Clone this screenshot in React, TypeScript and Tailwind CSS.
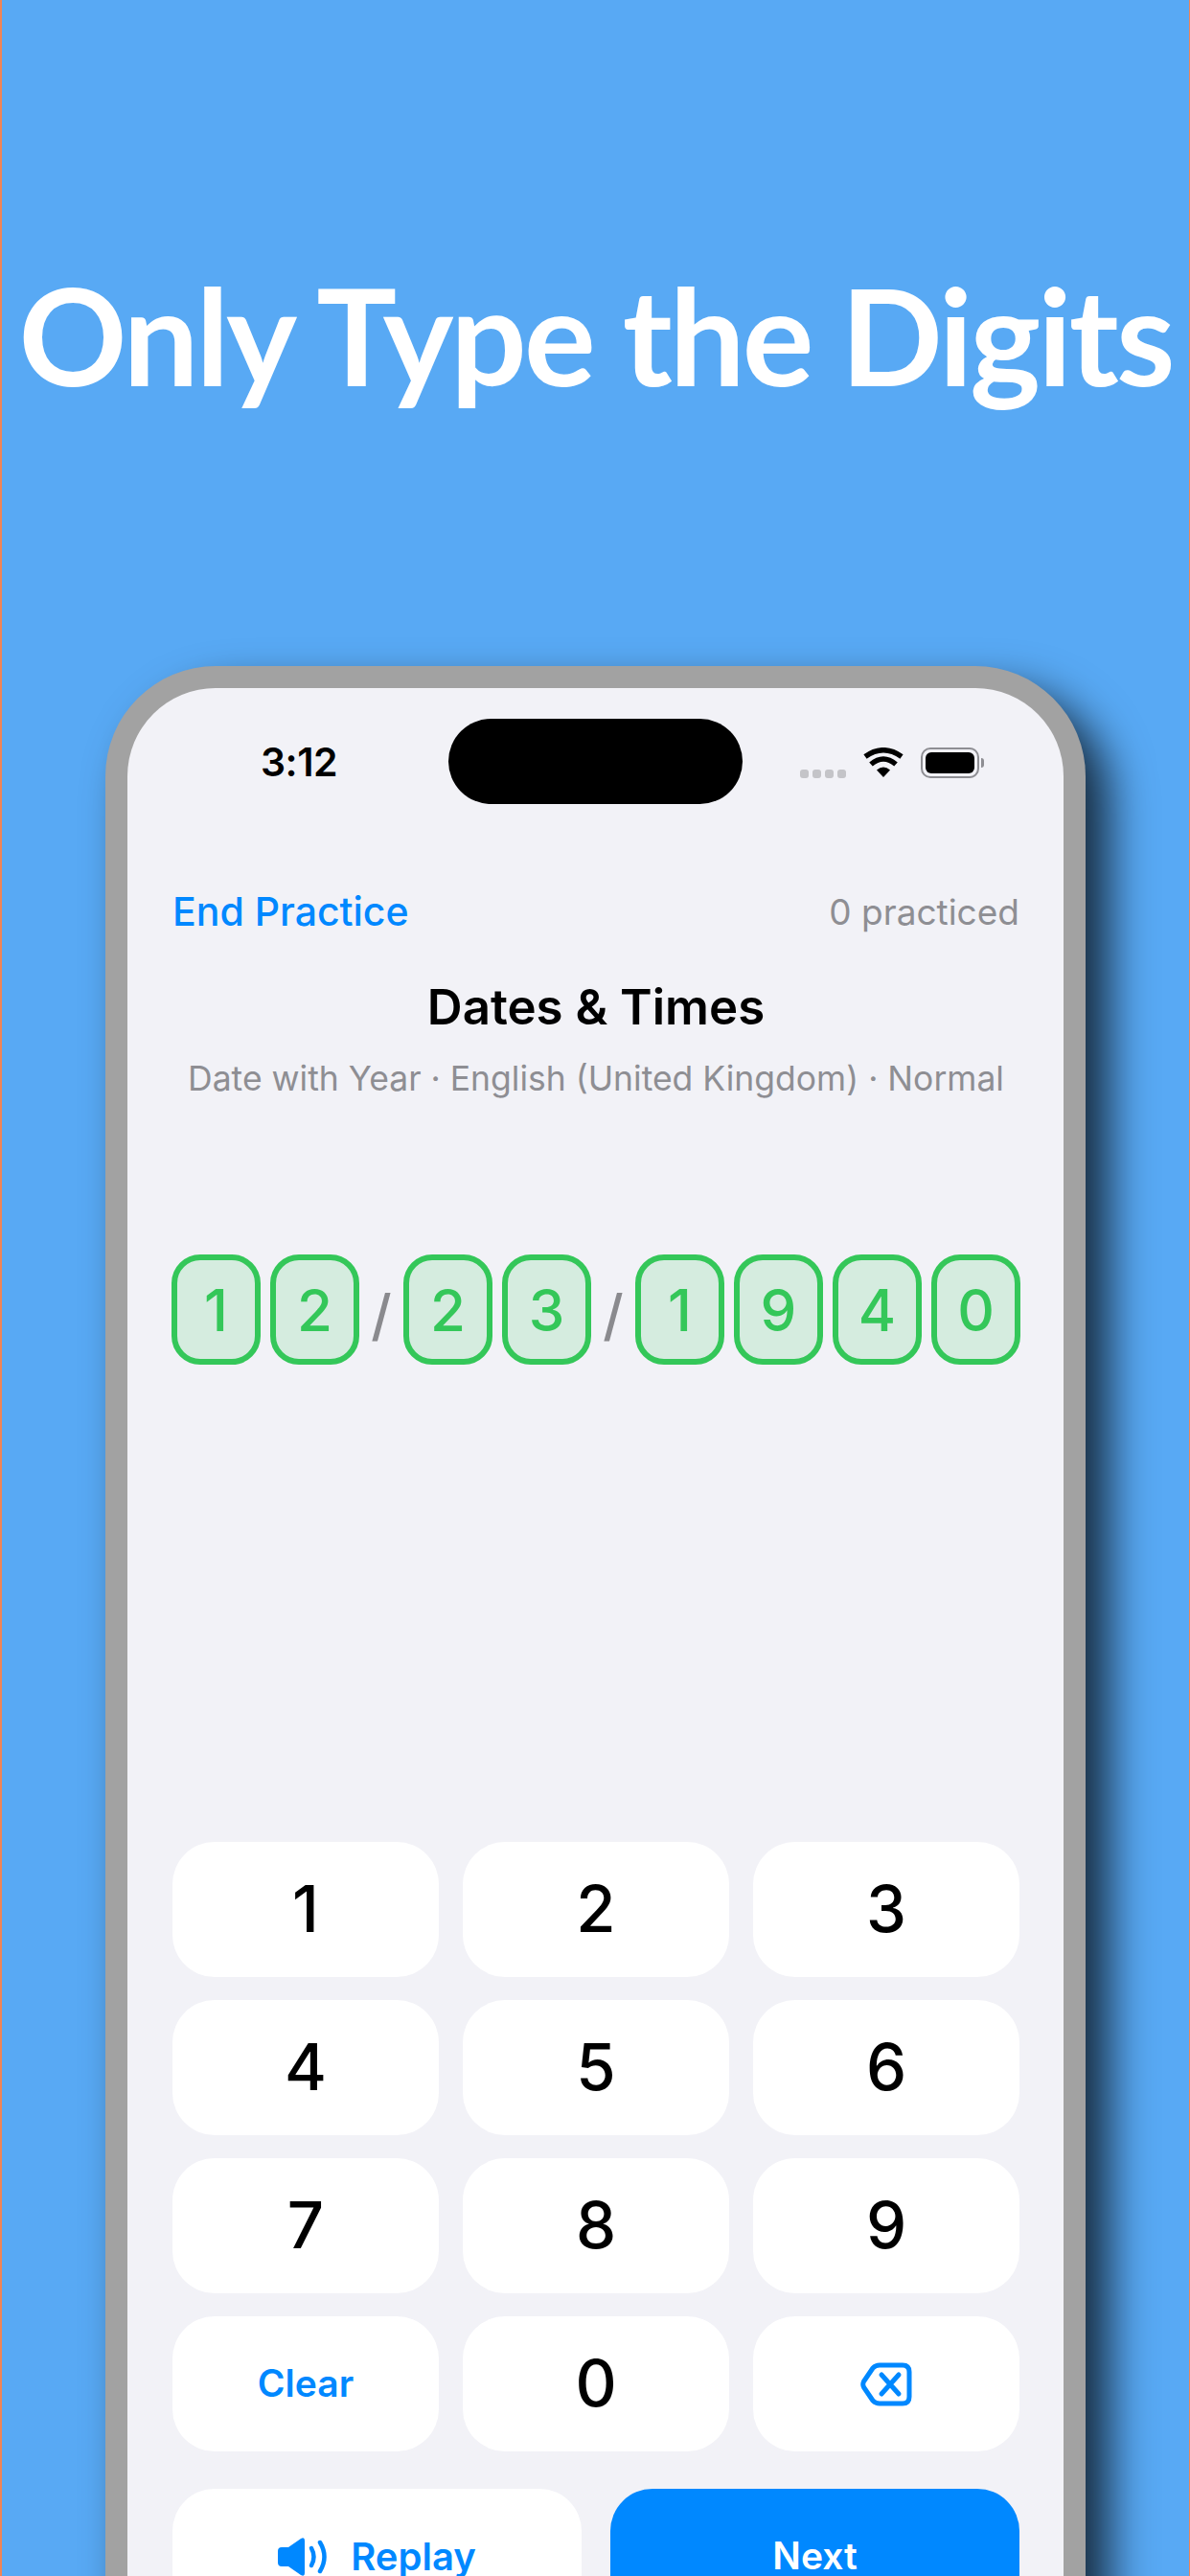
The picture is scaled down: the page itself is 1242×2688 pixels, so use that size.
import { ReactNode } from 'react';

const KEYS = ['1', '2', '3', '4', '5', '6', '7', '8', '9'];

function DigitBox({ value }: { value: string }) {
  return (
    <div className="flex h-[115px] w-[93px] items-center justify-center rounded-[30px] border-[6px] border-[#34c759] bg-[#d5ecdf] text-[60px] font-[550] text-[#34c759]">
      {value}
    </div>
  );
}

function Slash() {
  return <span className="w-[46px] pt-[12px] text-center text-[58px] font-medium text-[#8a8a8e]">/</span>;
}

function Key({ children }: { children: ReactNode }) {
  return (
    <div className="flex h-[141px] items-center justify-center rounded-[44px] bg-white text-[67px] font-[550] text-black">
      {children}
    </div>
  );
}

function Wifi() {
  return (
    <svg width="42" height="32" viewBox="0 0 42 32" fill="none">
      <path d="M21 31 L14 23.5 Q21 17.5 28 23.5 Z" fill="#000" />
      <path d="M8 17.5 Q21 6.5 34 17.5" stroke="#000" strokeWidth="5.5" />
      <path d="M2 9.5 Q21 -4 40 9.5" stroke="#000" strokeWidth="5.5" />
    </svg>
  );
}

function Battery() {
  return (
    <div className="flex items-center gap-[2px]">
      <div className="h-[32px] w-[61px] rounded-[10px] border-2 border-[#8e8e93] p-[3px]">
        <div className="h-full w-full rounded-[6px] bg-black" />
      </div>
      <div className="h-[10px] w-[3px] rounded-r-full bg-[#8e8e93]" />
    </div>
  );
}

function DeleteIcon() {
  return (
    <svg width="54" height="46" viewBox="0 0 54 46" fill="none" stroke="#0088ff" strokeWidth="5" strokeLinejoin="round" strokeLinecap="round">
      <path d="M20 3 H44 Q51 3 51 10 V36 Q51 43 44 43 H20 Q16 43 13 40 L3.5 26 Q2 23 3.5 20 L13 6 Q16 3 20 3 Z" />
      <path d="M22 13 L40 33 M40 13 L22 33" />
    </svg>
  );
}

function SpeakerIcon() {
  return (
    <svg width="52" height="40" viewBox="0 0 52 40" fill="none">
      <path d="M4 10 H11 L24 1 Q28 -1 28 3 V37 Q28 41 24 39 L11 30 H4 Q0 30 0 26 V14 Q0 10 4 10 Z" fill="#0088ff" />
      <path d="M35 11 Q40 20 35 29" stroke="#0088ff" strokeWidth="4.5" strokeLinecap="round" />
      <path d="M44 5 Q53 20 44 35" stroke="#0088ff" strokeWidth="4.5" strokeLinecap="round" />
    </svg>
  );
}

export default function App() {
  return (
    <div className="h-[2688px] w-[1242px] overflow-hidden border-r border-l-2 border-x-[#ee8458] bg-[#58a9f4] font-['Inter',sans-serif]">
      <h1 className="pt-[259px] pb-[2px] text-center font-['Lato',sans-serif] text-[140px] leading-[180px] font-bold tracking-[-3px] whitespace-nowrap text-white">
        Only Type the Digits
      </h1>

      {/* phone mockup, runs off the bottom of the page */}
      <div className="mt-[254px] ml-[108px] h-[2200px] w-[1023px] rounded-[115px] bg-[#a2a2a2] p-[23px] shadow-[25px_25px_46px_rgba(0,0,0,0.74)]">
        <div className="h-full rounded-[92px] bg-[#f2f2f7] pr-[46px] pl-[47px]">
          {/* status bar */}
          <div className="relative flex h-[130px] items-center justify-between pt-[26px] pl-[92px] pr-[37px]">
            <span className="text-[41px] font-semibold tracking-[-0.5px] text-black">3:12</span>
            <div className="absolute top-[32px] left-[288px] h-[89px] w-[307px] rounded-[45px] bg-black" />
            <div className="flex items-center gap-[18px]">
              <div className="mt-[22px] flex gap-[4px]">
                <span className="h-[9px] w-[9px] rounded-[3px] bg-[#c4c4c8]" />
                <span className="h-[9px] w-[9px] rounded-[3px] bg-[#c4c4c8]" />
                <span className="h-[9px] w-[9px] rounded-[3px] bg-[#c4c4c8]" />
                <span className="h-[9px] w-[9px] rounded-[3px] bg-[#c4c4c8]" />
              </div>
              <Wifi />
              <Battery />
            </div>
          </div>

          {/* nav row */}
          <div className="mt-[80px] flex h-[47px] items-center justify-between">
            <span className="text-[41px] font-medium text-[#0088ff]">End Practice</span>
            <span className="text-[37px] font-normal text-[#8e8e93]">0 practiced</span>
          </div>

          <h2 className="mt-[45px] text-center text-[51px] leading-[62px] font-semibold text-black">Dates &amp; Times</h2>
          <p className="mt-[22px] text-center text-[35.5px] leading-[44px] font-normal text-[#8e8e93]">
            Date with Year · English (United Kingdom) · Normal
          </p>

          {/* answer */}
          <div className="mt-[161px] -mx-[1px] flex items-center justify-between">
            <div className="flex gap-[10px]">
              <DigitBox value="1" />
              <DigitBox value="2" />
            </div>
            <Slash />
            <div className="flex gap-[10px]">
              <DigitBox value="2" />
              <DigitBox value="3" />
            </div>
            <Slash />
            <div className="flex gap-[10px]">
              <DigitBox value="1" />
              <DigitBox value="9" />
              <DigitBox value="4" />
              <DigitBox value="0" />
            </div>
          </div>

          {/* keypad */}
          <div className="mt-[498px] grid grid-cols-3 gap-x-[25px] gap-y-[24px]">
            {KEYS.map((k) => (
              <Key key={k}>{k}</Key>
            ))}
            <Key>
              <span className="text-[39px] font-semibold text-[#0088ff]">Clear</span>
            </Key>
            <Key>0</Key>
            <Key>
              <DeleteIcon />
            </Key>
          </div>

          <div className="mt-[39px] grid grid-cols-2 gap-[30px]">
            <div className="flex h-[141px] items-center justify-center gap-[24px] rounded-[44px] bg-white text-[40px] font-semibold text-[#0088ff]">
              <SpeakerIcon />
              Replay
            </div>
            <div className="flex h-[141px] items-center justify-center rounded-[44px] bg-[#0088ff] text-[39px] font-semibold text-white">
              Next
            </div>
          </div>
        </div>
      </div>
    </div>
  );
}
